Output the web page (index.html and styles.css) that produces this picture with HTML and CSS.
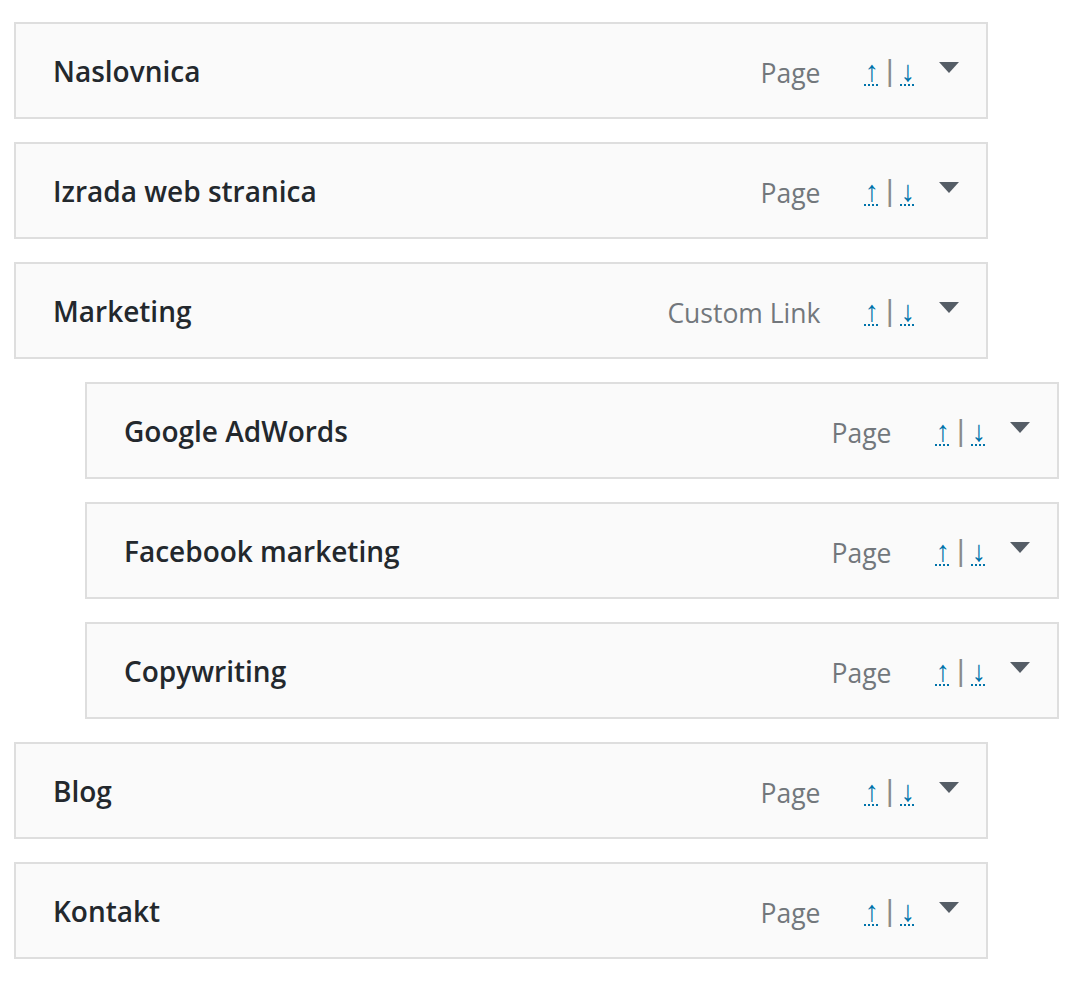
FILE: index.html
```html
<!DOCTYPE html>
<html lang="hr">
<head>
<meta charset="utf-8">
<title>Izbornik</title>
<link rel="stylesheet" href="styles.css">
</head>
<body>
<ul class="menu">
  <li class="menu-item">
    <div class="item-bar">
      <span class="item-title">Naslovnica</span>
      <span class="item-controls">
        <span class="item-type">Page</span>
        <span class="item-order"><abbr class="move" title="Move up">↑</abbr><span class="sep">|</span><abbr class="move" title="Move down">↓</abbr></span>
        <span class="item-edit"></span>
      </span>
    </div>
  </li>
  <li class="menu-item">
    <div class="item-bar">
      <span class="item-title">Izrada web stranica</span>
      <span class="item-controls">
        <span class="item-type">Page</span>
        <span class="item-order"><abbr class="move" title="Move up">↑</abbr><span class="sep">|</span><abbr class="move" title="Move down">↓</abbr></span>
        <span class="item-edit"></span>
      </span>
    </div>
  </li>
  <li class="menu-item">
    <div class="item-bar">
      <span class="item-title">Marketing</span>
      <span class="item-controls">
        <span class="item-type">Custom Link</span>
        <span class="item-order"><abbr class="move" title="Move up">↑</abbr><span class="sep">|</span><abbr class="move" title="Move down">↓</abbr></span>
        <span class="item-edit"></span>
      </span>
    </div>
  </li>
  <li class="menu-item depth-1">
    <div class="item-bar">
      <span class="item-title">Google AdWords</span>
      <span class="item-controls">
        <span class="item-type">Page</span>
        <span class="item-order"><abbr class="move" title="Move up">↑</abbr><span class="sep">|</span><abbr class="move" title="Move down">↓</abbr></span>
        <span class="item-edit"></span>
      </span>
    </div>
  </li>
  <li class="menu-item depth-1">
    <div class="item-bar">
      <span class="item-title">Facebook marketing</span>
      <span class="item-controls">
        <span class="item-type">Page</span>
        <span class="item-order"><abbr class="move" title="Move up">↑</abbr><span class="sep">|</span><abbr class="move" title="Move down">↓</abbr></span>
        <span class="item-edit"></span>
      </span>
    </div>
  </li>
  <li class="menu-item depth-1">
    <div class="item-bar">
      <span class="item-title">Copywriting</span>
      <span class="item-controls">
        <span class="item-type">Page</span>
        <span class="item-order"><abbr class="move" title="Move up">↑</abbr><span class="sep">|</span><abbr class="move" title="Move down">↓</abbr></span>
        <span class="item-edit"></span>
      </span>
    </div>
  </li>
  <li class="menu-item">
    <div class="item-bar">
      <span class="item-title">Blog</span>
      <span class="item-controls">
        <span class="item-type">Page</span>
        <span class="item-order"><abbr class="move" title="Move up">↑</abbr><span class="sep">|</span><abbr class="move" title="Move down">↓</abbr></span>
        <span class="item-edit"></span>
      </span>
    </div>
  </li>
  <li class="menu-item">
    <div class="item-bar">
      <span class="item-title">Kontakt</span>
      <span class="item-controls">
        <span class="item-type">Page</span>
        <span class="item-order"><abbr class="move" title="Move up">↑</abbr><span class="sep">|</span><abbr class="move" title="Move down">↓</abbr></span>
        <span class="item-edit"></span>
      </span>
    </div>
  </li>
</ul>
</body>
</html>
```
FILE: styles.css
```css
html, body {
  margin: 0;
  padding: 0;
  background: #ffffff;
}

body {
  font-family: "Open Sans", "Noto Sans", sans-serif;
  color: #23282d;
}

.menu {
  list-style: none;
  margin: 0;
  padding: 22px 0 0 14px;
  display: flex;
  flex-direction: column;
  gap: 23px;
}

.menu-item {
  width: 974px;
}

.menu-item.depth-1 {
  margin-left: 71px;
}

.item-bar {
  box-sizing: border-box;
  height: 97px;
  display: flex;
  align-items: center;
  padding: 0 27px 0 37px;
  background: #fafafa;
  border: 2px solid #dedede;
}

.item-title {
  flex: 1;
  font-size: 28px;
  font-weight: 600;
  color: #23282d;
  padding-top: 1px;
}

.item-controls {
  display: flex;
  align-items: center;
}

.item-type {
  font-size: 26.5px;
  color: #72777c;
  margin-right: 44px;
  padding-top: 4px;
}

.item-order {
  display: flex;
  align-items: baseline;
  font-family: "Liberation Sans", Arial, sans-serif;
  font-size: 29px;
  padding-top: 2px;
}

.move {
  color: #0073aa;
  text-decoration: underline dotted;
  text-decoration-thickness: 2px;
  text-underline-offset: 3px;
  cursor: pointer;
}

.sep {
  color: #8a8a8a;
  margin: 0 7px 0 7px;
}

.item-edit {
  width: 0;
  height: 0;
  margin-left: 24px;
  margin-top: -6px;
  border-left: 10px solid transparent;
  border-right: 10px solid transparent;
  border-top: 11px solid #555d66;
}
```
